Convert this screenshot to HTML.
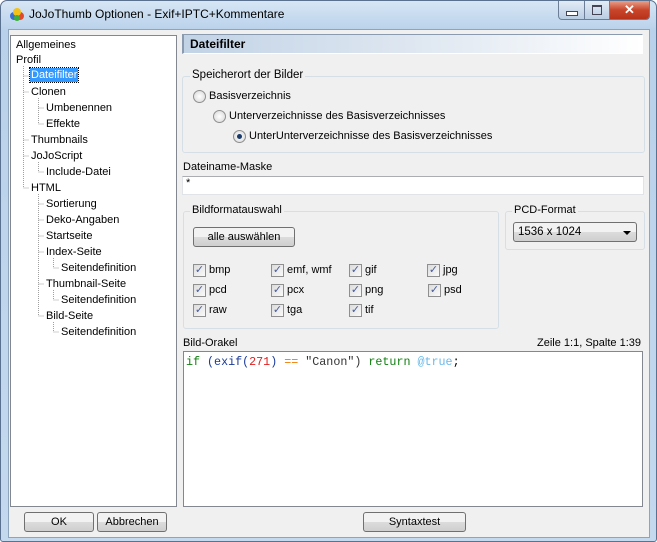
<html><head><style>
body{margin:0;width:657px;height:542px;overflow:hidden;font-family:"Liberation Sans",sans-serif;font-size:11px;color:#000;background:#fff}
.win{position:absolute;left:0;top:0;width:655px;height:540px;border:1px solid #5a7190;border-radius:7px 7px 3px 3px;background:linear-gradient(#d7e6f5,#b9d1ea 30px,#c4d9ee)}
.client{position:absolute;left:8px;top:29px;width:640px;height:507px;background:#f0f0f0;border:1px solid #8ea4bd}
.a{position:absolute}
.tree{left:10px;top:35px;width:165px;height:470px;background:#fff;border:1px solid #828790}
.tree div{position:absolute;white-space:nowrap;line-height:14px}
.grp{border:1px solid #d5dfe5;border-radius:3px}
.leg{background:#f0f0f0;padding:0 2px}
.btn{border:1px solid #707070;border-radius:3px;background:linear-gradient(#f2f2f2 50%,#dcdcdc 50%,#cfcfcf);text-align:center;line-height:18px;box-sizing:border-box}
.cb{position:absolute;width:11px;height:11px;border:1px solid #8f8f8f;background:linear-gradient(135deg,#dcdcdc,#fafafa);font-size:11px;line-height:11px;text-align:center;color:#4a5f97}
.rd{position:absolute;width:11px;height:11px;border:1px solid #8f8f8f;border-radius:50%;background:radial-gradient(#fff,#d6d6d6)}
.mono{font-family:"Liberation Mono",monospace;font-size:11.7px}
</style></head><body>
<div class="win">
<div class="a" style="left:9px;top:7px;width:14px;height:14px"><svg width="14" height="14"><circle cx="4" cy="8" r="4" fill="#3a6fd0"/><circle cx="10" cy="8" r="4" fill="#e04a2a"/><circle cx="7" cy="4" r="4" fill="#f2c21a"/><circle cx="7" cy="10" r="3" fill="#3cae3c"/></svg></div>
<div class="a" style="left:28px;top:6px;font-size:12px;color:#000">JoJoThumb Optionen - Exif+IPTC+Kommentare</div>
<div class="a" style="left:557px;top:0;width:90px;height:18px;border:1px solid #6b7e96;border-top:none;border-radius:0 0 4px 4px;background:linear-gradient(#e2ecf6,#b9cde3);overflow:hidden">
<div class="a" style="left:0;width:25px;height:18px;border-right:1px solid #6b7e96"><div class="a" style="left:7px;top:10px;width:10px;height:3px;border:1px solid #445;background:#fff"></div></div>
<div class="a" style="left:26px;width:24px;height:18px;border-right:1px solid #6b7e96"><div class="a" style="left:7px;top:4px;width:8px;height:7px;border:1px solid #445;border-top-width:2px"></div></div>
<div class="a" style="left:51px;width:39px;height:18px;background:linear-gradient(#e8a08a,#c8452a 50%,#b8321a);color:#fff;font-weight:bold;font-size:13px;text-align:center;line-height:17px">✕</div>
</div>
</div>
<div class="client"></div>
<div class="a tree">
<div style="left:5px;top:2px">Allgemeines</div>
<div style="left:5px;top:17px">Profil</div>
<svg class="a" style="left:0;top:0" width="80" height="300"><g stroke="#a0a0a0" stroke-dasharray="1,1" fill="none"><path d="M12.5 30V152M12.5 40H18M12.5 56H18M12.5 104H18M12.5 120H18M12.5 152H18M27.5 62V88M27.5 72H33M27.5 88H33M27.5 126V136M27.5 136H33M27.5 158V280M27.5 168H33M27.5 184H33M27.5 200H33M27.5 216H33M27.5 248H33M27.5 280H33M42.5 222V232M42.5 232H48M42.5 254V264M42.5 264H48M42.5 286V296M42.5 296H48"/></g></svg>
<div style="left:19px;top:32px;background:#3399ff;color:#fff;padding:0 1px;outline:1px dotted #000">Dateifilter</div>
<div style="left:20px;top:49px">Clonen</div>
<div style="left:35px;top:65px">Umbenennen</div>
<div style="left:35px;top:81px">Effekte</div>
<div style="left:20px;top:97px">Thumbnails</div>
<div style="left:20px;top:113px">JoJoScript</div>
<div style="left:35px;top:129px">Include-Datei</div>
<div style="left:20px;top:145px">HTML</div>
<div style="left:35px;top:161px">Sortierung</div>
<div style="left:35px;top:177px">Deko-Angaben</div>
<div style="left:35px;top:193px">Startseite</div>
<div style="left:35px;top:209px">Index-Seite</div>
<div style="left:50px;top:225px">Seitendefinition</div>
<div style="left:35px;top:241px">Thumbnail-Seite</div>
<div style="left:50px;top:257px">Seitendefinition</div>
<div style="left:35px;top:273px">Bild-Seite</div>
<div style="left:50px;top:289px">Seitendefinition</div>
</div>
<div class="a" style="left:182px;top:34px;width:452px;height:18px;border:1px solid #fff;border-left:2px solid #8a9bb0;border-top:1px solid #8a9bb0;background:linear-gradient(90deg,#c2d3e6,#e4ebf3 60%,#fff);font-weight:bold;font-size:12px;line-height:18px;padding-left:6px">Dateifilter</div>
<div class="a grp" style="left:182px;top:76px;width:461px;height:75px"></div>
<div class="a leg" style="left:190px;top:69px;font-size:11.5px">Speicherort der Bilder</div>
<div class="rd" style="left:193px;top:90px"></div><div class="a" style="left:209px;top:90px">Basisverzeichnis</div>
<div class="rd" style="left:213px;top:110px"></div><div class="a" style="left:229px;top:110px">Unterverzeichnisse des Basisverzeichnisses</div>
<div class="rd" style="left:233px;top:130px"><div class="a" style="left:3px;top:3px;width:5px;height:5px;border-radius:50%;background:#1a3a6a"></div></div><div class="a" style="left:249px;top:130px">UnterUnterverzeichnisse des Basisverzeichnisses</div>
<div class="a" style="left:183px;top:161px">Dateiname-Maske</div>
<div class="a" style="left:182px;top:176px;width:460px;height:17px;background:#fff;border:1px solid #e0e4e8;border-top-color:#abadb3"></div>
<div class="a" style="left:186px;top:177px">*</div>
<div class="a grp" style="left:183px;top:211px;width:314px;height:116px"></div>
<div class="a leg" style="left:190px;top:204px">Bildformatauswahl</div>
<div class="a btn" style="left:193px;top:227px;width:102px;height:20px">alle auswählen</div>
<div class="cb" style="left:193px;top:264px">✓</div><div class="a" style="left:209px;top:264px">bmp</div>
<div class="cb" style="left:271px;top:264px">✓</div><div class="a" style="left:287px;top:264px">emf, wmf</div>
<div class="cb" style="left:349px;top:264px">✓</div><div class="a" style="left:365px;top:264px">gif</div>
<div class="cb" style="left:427px;top:264px">✓</div><div class="a" style="left:443px;top:264px">jpg</div>
<div class="cb" style="left:193px;top:284px">✓</div><div class="a" style="left:209px;top:284px">pcd</div>
<div class="cb" style="left:271px;top:284px">✓</div><div class="a" style="left:287px;top:284px">pcx</div>
<div class="cb" style="left:349px;top:284px">✓</div><div class="a" style="left:365px;top:284px">png</div>
<div class="cb" style="left:428px;top:284px">✓</div><div class="a" style="left:444px;top:284px">psd</div>
<div class="cb" style="left:193px;top:304px">✓</div><div class="a" style="left:209px;top:304px">raw</div>
<div class="cb" style="left:271px;top:304px">✓</div><div class="a" style="left:287px;top:304px">tga</div>
<div class="cb" style="left:349px;top:304px">✓</div><div class="a" style="left:365px;top:304px">tif</div>
<div class="a grp" style="left:505px;top:211px;width:138px;height:37px"></div>
<div class="a leg" style="left:512px;top:204px">PCD-Format</div>
<div class="a btn" style="left:513px;top:222px;width:124px;height:20px;text-align:left;padding-left:4px;font-size:11.5px">1536 x 1024<span class="a" style="right:5px;top:8px;width:0;height:0;border:4px solid transparent;border-top:4px solid #000;border-bottom:none"></span></div>
<div class="a" style="left:183px;top:337px">Bild-Orakel</div>
<div class="a" style="right:16px;top:337px">Zeile 1:1, Spalte 1:39</div>
<div class="a" style="left:183px;top:351px;width:458px;height:154px;background:#fff;border:1px solid #828790"></div>
<div class="a mono" style="left:186px;top:355px;white-space:pre"><span style="color:#108010">if</span> <span style="color:#1a3a9a">(exif(</span><span style="color:#e02020">271</span><span style="color:#1a3a9a">)</span> <span style="color:#f07a00">==</span> <span style="color:#333">"Canon")</span> <span style="color:#108010">return</span> <span style="color:#6ab8e8">@true</span>;</div>
<div class="a btn" style="left:24px;top:512px;width:70px;height:20px">OK</div>
<div class="a btn" style="left:97px;top:512px;width:70px;height:20px">Abbrechen</div>
<div class="a btn" style="left:363px;top:512px;width:103px;height:20px">Syntaxtest</div>
</body></html>
